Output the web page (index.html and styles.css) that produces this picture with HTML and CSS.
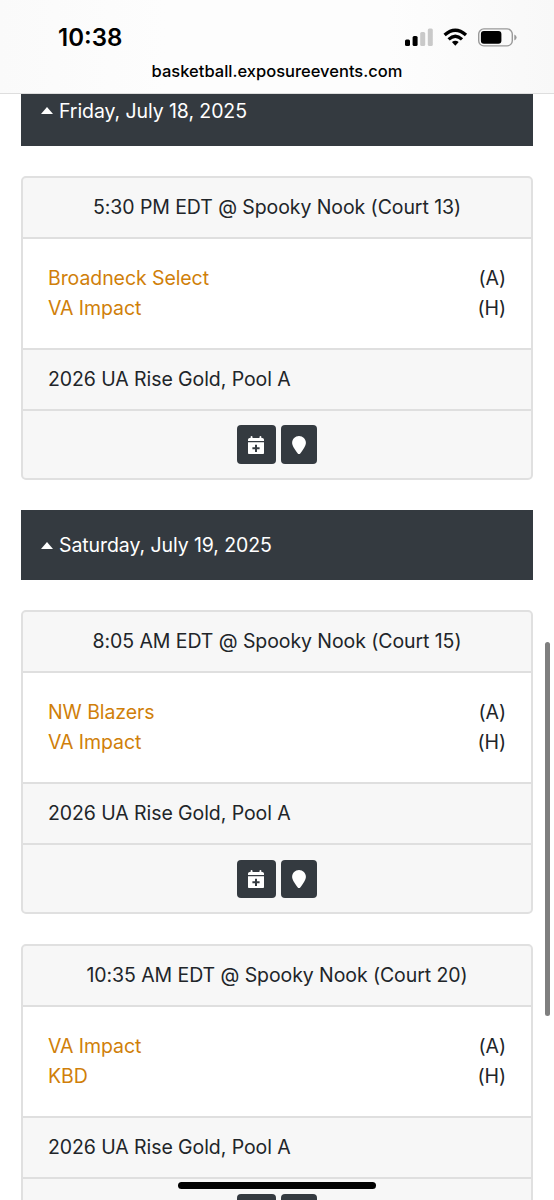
FILE: index.html
```html
<!DOCTYPE html>
<html lang="en">
<head>
<meta charset="utf-8">
<title>Schedule</title>
<link rel="stylesheet" href="styles.css">
</head>
<body>
<svg class="defs" aria-hidden="true">
  <symbol id="calendar" viewBox="0 0 16 18.4">
    <path d="M0 5V3.6Q0 1.9 1.7 1.9H2.6V1Q2.6 0 3.55 0T4.5 1V1.9H11.5V1Q11.5 0 12.45 0T13.4 1V1.9H14.3Q16 1.9 16 3.6V5Z"/>
    <path fill-rule="evenodd" d="M0 6.3H16V16.7Q16 18.4 14.3 18.4H1.7Q0 18.4 0 16.7ZM7 8.700V11.300H4.400V13.300H7V15.900H9V13.300H11.600V11.300H9V8.700Z"/>
  </symbol>
  <symbol id="pin" viewBox="0 0 384 512">
    <path d="M384 192c0 87.400-117 243-168.300 307.200c-12.300 15.300-35.100 15.300-47.400 0C117 435 0 279.400 0 192C0 86 86 0 192 0S384 86 384 192z"/>
  </symbol>
</svg>
<div class="screen">
  <header class="top">
    <div class="status">
      <span class="clock">10:38</span>
      <svg class="indicators" viewBox="0 0 112 20">
        <g>
          <rect x="0" y="11.500" width="5" height="6.500" rx="1.500"/>
          <rect x="7.600" y="8" width="5" height="10" rx="1.500"/>
          <rect x="15.200" y="4" width="5" height="14" rx="1.500" fill="#c9c9c9"/>
          <rect x="22.800" y="0.500" width="5" height="17.500" rx="1.500" fill="#c9c9c9"/>
        </g>
        <g fill="none" stroke="#000" stroke-width="3.300">
          <path d="M39.600 7.100Q50.300-2.500 61 7.100"/>
          <path d="M43.600 11.400Q50.300 5.300 57 11.400"/>
        </g>
        <path d="M46.900 14.100Q50.300 11.300 53.700 14.100L50.300 17.700Z"/>
        <rect x="73.700" y="0.900" width="33.600" height="17" rx="5.200" fill="none" stroke="#999" stroke-width="1.400"/>
        <rect x="75.900" y="3" width="20.500" height="12.700" rx="3"/>
        <path d="M109.300 6.500Q111.600 7.300 111.600 9.500T109.300 12.500Z" fill="#999"/>
      </svg>
    </div>
    <div class="address">basketball.exposureevents.com</div>
  </header>

  <main class="schedule">
    <h2 class="day day-first"><i class="caret"></i><span>Friday, July 18, 2025</span></h2>
    <section class="card">
      <div class="card-head">5:30 PM EDT @ Spooky Nook (Court 13)</div>
      <div class="teams">
        <div class="team"><a>Broadneck Select</a><span>(A)</span></div>
        <div class="team"><a>VA Impact</a><span>(H)</span></div>
      </div>
      <div class="pool">2026 UA Rise Gold, Pool A</div>
      <div class="actions">
        <span class="btn btn-calendar"><svg class="icon-calendar"><use href="#calendar"/></svg></span>
        <span class="btn btn-pin"><svg class="icon-pin"><use href="#pin"/></svg></span>
      </div>
    </section>

    <h2 class="day"><i class="caret"></i><span>Saturday, July 19, 2025</span></h2>
    <section class="card">
      <div class="card-head">8:05 AM EDT @ Spooky Nook (Court 15)</div>
      <div class="teams">
        <div class="team"><a>NW Blazers</a><span>(A)</span></div>
        <div class="team"><a>VA Impact</a><span>(H)</span></div>
      </div>
      <div class="pool">2026 UA Rise Gold, Pool A</div>
      <div class="actions">
        <span class="btn btn-calendar"><svg class="icon-calendar"><use href="#calendar"/></svg></span>
        <span class="btn btn-pin"><svg class="icon-pin"><use href="#pin"/></svg></span>
      </div>
    </section>
    <section class="card">
      <div class="card-head">10:35 AM EDT @ Spooky Nook (Court 20)</div>
      <div class="teams">
        <div class="team"><a>VA Impact</a><span>(A)</span></div>
        <div class="team"><a>KBD</a><span>(H)</span></div>
      </div>
      <div class="pool">2026 UA Rise Gold, Pool A</div>
      <div class="actions">
        <span class="btn btn-calendar"><svg class="icon-calendar"><use href="#calendar"/></svg></span>
        <span class="btn btn-pin"><svg class="icon-pin"><use href="#pin"/></svg></span>
      </div>
    </section>
  </main>
  <div class="scrollbar"></div>
  <div class="home-indicator"></div>
</div>
</body>
</html>
```
FILE: styles.css
```css
* { box-sizing: border-box; }
body { margin: 0; background: #fff; }
.defs { position: absolute; width: 0; height: 0; }
.screen {
  position: relative;
  height: 1200px;
  overflow: hidden;
  font-family: Inter, "Liberation Sans", sans-serif;
  font-size: 19.5px;
  letter-spacing: -0.08px;
  line-height: 30px;
  color: #212529;
}
.top {
  height: 94px;
  background: linear-gradient(90deg, #fafafa, #fdfdfd 30%, #fdfdfd 70%, #f8f8f8);
  border-bottom: 1px solid #dedede;
  color: #000;
}
.status {
  display: flex;
  justify-content: space-between;
  align-items: flex-start;
  padding: 23px 37px 0 58px;
  height: 60px;
}
.clock { font-size: 24px; font-weight: 600; letter-spacing: 0; }
.indicators { width: 112px; height: 20px; margin-top: 4.5px; }
.address {
  text-align: center;
  font-size: 16.5px;
  font-weight: 500;
  letter-spacing: 0;
  line-height: 22px;
}
.schedule { padding: 0 21px; }
.day {
  display: flex;
  align-items: center;
  gap: 6px;
  height: 69.2px;
  margin: 30.2px 0 30.7px;
  padding: 0 20px;
  background: #343a40;
  color: #fff;
  font-size: inherit;
  font-weight: 400;
}
.day-first { height: 51.6px; margin-top: 0; padding-bottom: 18px; }
.caret {
  border: 6px solid transparent;
  border-top: 0;
  border-bottom: 7px solid #fff;
}
.card {
  height: 304px;
  margin-bottom: 30px;
  border: 2px solid #e0e0e0;
  border-radius: 5px;
  background: #f7f7f7;
  overflow: hidden;
}
.card-head {
  height: 61px;
  padding-top: 14.1px;
  border-bottom: 2px solid #dfdfdf;
  text-align: center;
}
.teams {
  height: 111px;
  padding: 23.8px 25px 0;
  border-bottom: 2px solid #dfdfdf;
  background: #fff;
}
.team { display: flex; justify-content: space-between; }
.team a { color: #d07f0a; }
.pool {
  height: 61px;
  padding: 14.1px 25px 0;
  border-bottom: 2px solid #dfdfdf;
}
.actions {
  display: flex;
  justify-content: center;
  gap: 5px;
  padding: 14.2px 0 0;
}
.btn {
  display: flex;
  justify-content: center;
  align-items: center;
  height: 38.5px;
  border-radius: 4px;
  background: #343a40;
  fill: #fff;
}
.btn-calendar { width: 38.5px; }
.btn-pin { width: 36.5px; }
.icon-calendar { width: 16px; height: 18.4px; }
.icon-pin { width: 14px; height: 18.4px; }
.scrollbar {
  position: absolute;
  top: 642px;
  right: 4px;
  width: 5px;
  height: 374px;
  border-radius: 3px;
  background: #7f7f7f;
}
.home-indicator {
  position: absolute;
  top: 1181.5px;
  left: 178px;
  width: 198px;
  height: 7px;
  border-radius: 4px;
  background: #000;
}
```
